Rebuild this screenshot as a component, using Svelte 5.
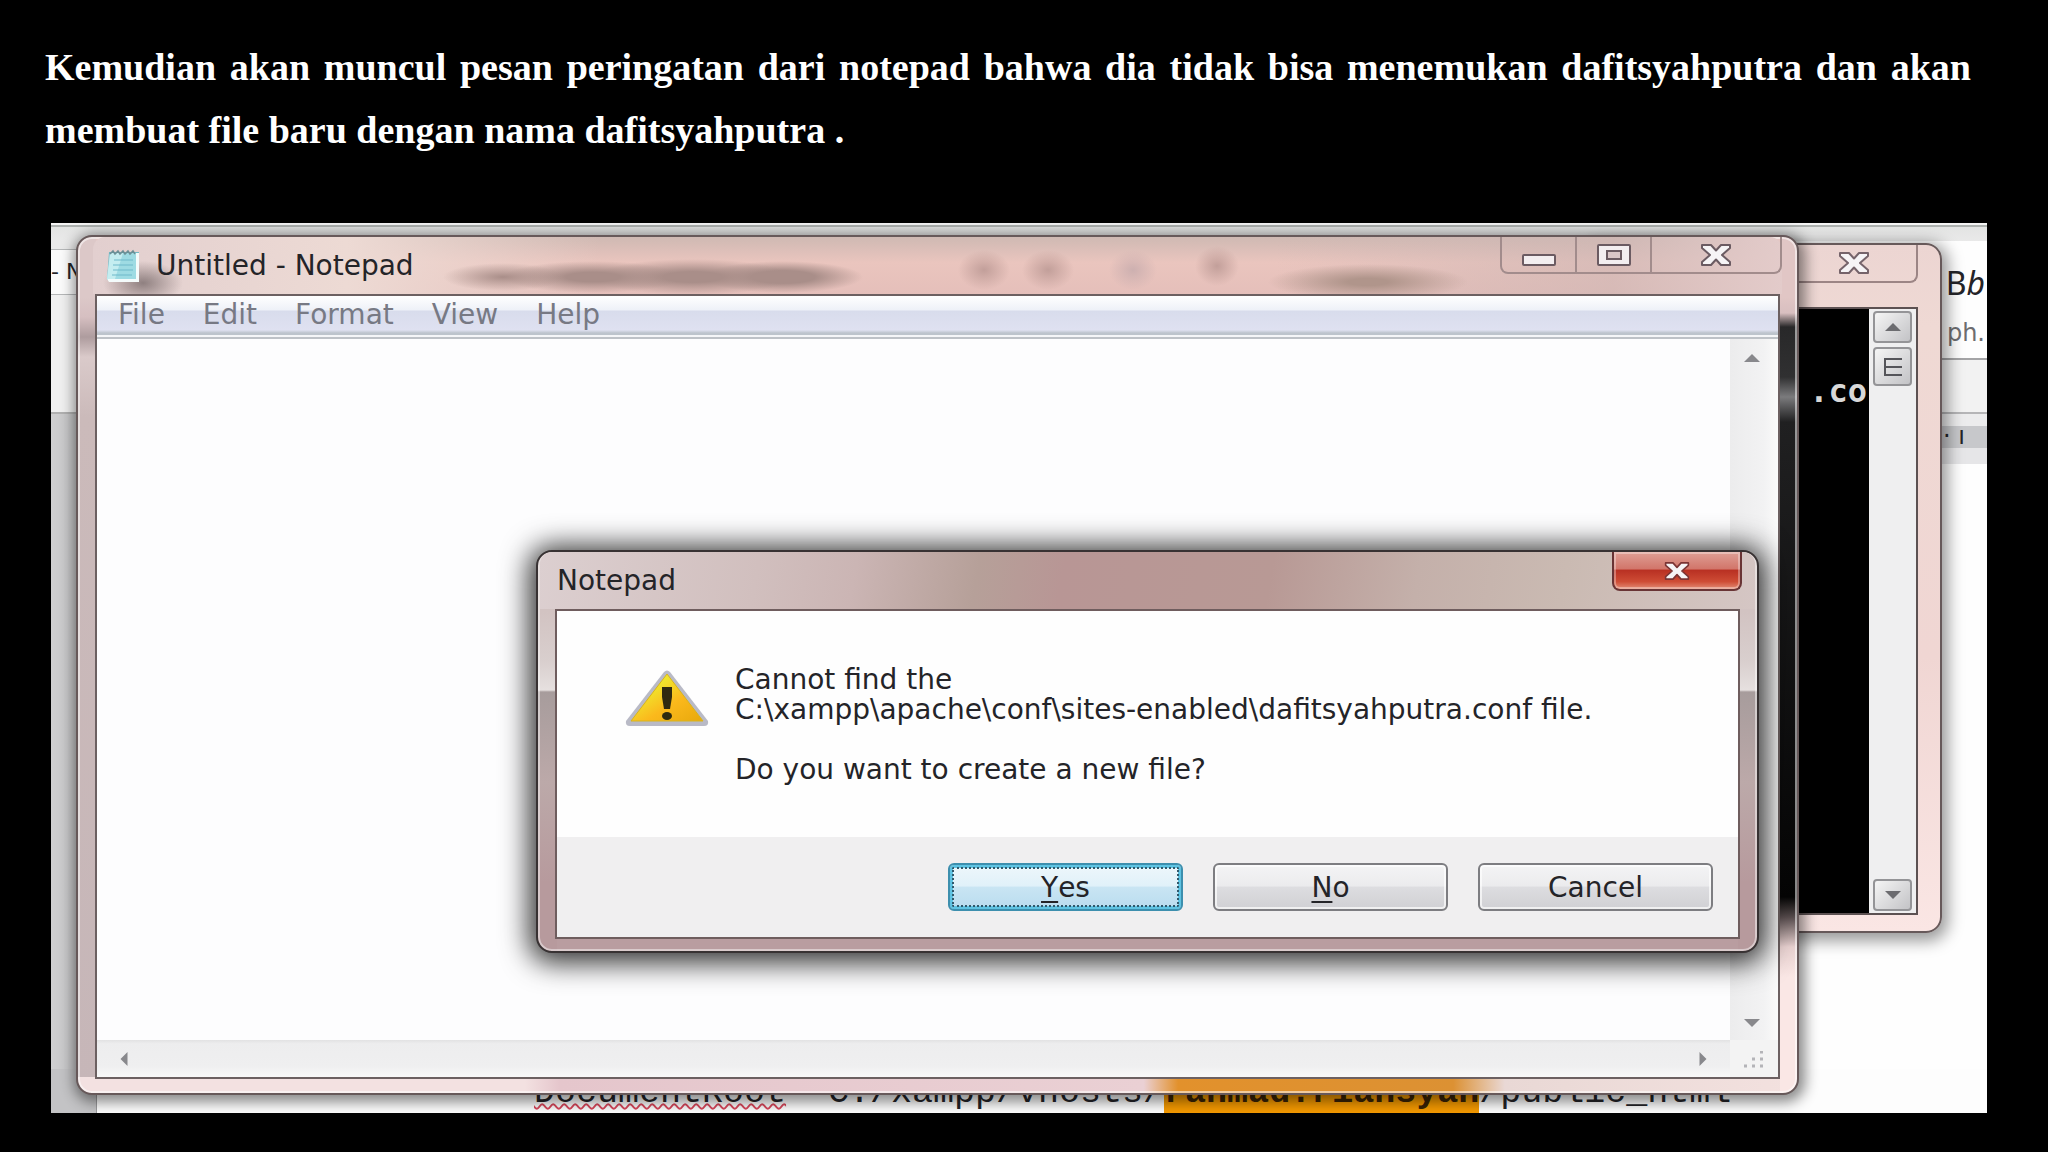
<script lang="ts">
  const menus = ['File', 'Edit', 'Format', 'View', 'Help'];

  let content = $state('');
</script>

{#snippet cross(outline: string)}
  <svg width="32" height="22" viewBox="0 0 32 22" aria-hidden="true">
    <path
      d="M2 1H11L16 6.5L21 1H30V4L22 11L30 18V21H21L16 15.5L11 21H2V18L10 11L2 4Z"
      fill="#f6f4f6"
      stroke={outline}
      stroke-width="2"
      stroke-linejoin="round"
    />
  </svg>
{/snippet}

{#snippet arrow(direction: string)}
  <svg class="arrow {direction}" width="20" height="10" viewBox="0 0 20 10" aria-hidden="true">
    <path d="M10 0L20 10H0Z" />
  </svg>
{/snippet}

<main>
  <p class="caption">
    Kemudian akan muncul pesan peringatan dari notepad bahwa dia tidak bisa menemukan dafitsyahputra
    dan akan membuat file baru dengan nama dafitsyahputra .
  </p>

  <div class="desktop">
    <div class="word">
      <div class="word-top"></div>
      <div class="word-sides">
        <div class="word-left">
          <div class="tab-row">- N</div>
          <div class="ribbon"></div>
          <div class="margin"></div>
        </div>
        <div class="word-right">
          <div class="styles">
            <span class="sample">B<i>b</i></span>
            <span class="style-name">ph.</span>
          </div>
          <div class="ribbon-foot"></div>
          <div class="ruler">· ı</div>
        </div>
      </div>
      <p class="code">
        <span class="misspelt">DocumentRoot</span> "C:/xampp/vhosts/<mark>rahmad.riansyah</mark>/public_html
      </p>
    </div>

    <section class="window console" aria-label="Command Prompt">
      <header class="console-title">
        <button class="console-close" aria-label="Close console">{@render cross('#75636a')}</button>
      </header>
      <div class="console-client">
        <pre>.co</pre>
        <div class="console-scroll">
          <button aria-label="Scroll console up">{@render arrow('up')}</button>
          <button class="thumb" aria-label="Scroll thumb">
            <svg width="20" height="20" viewBox="0 0 20 20" aria-hidden="true">
              <path d="M1 2H19M1 10H19M1 18H19M2 2V18" fill="none" stroke="#55555a" stroke-width="2" />
            </svg>
          </button>
          <button class="last" aria-label="Scroll console down">{@render arrow('down')}</button>
        </div>
      </div>
    </section>

    <section class="window notepad" aria-label="Untitled - Notepad">
      <header class="notepad-title">
        <svg width="36" height="36" viewBox="0 0 36 36" aria-hidden="true">
          <path d="M4 4H34V34L2 32Z" fill="#73b8c4" />
          <path d="M5 5H31V31H2Z" fill="#9edbe3" />
          <path d="M5 5H18L10 31H2Z" fill="#c4edf0" />
          <path d="M2 31H31V5H34V34H4Z" fill="#f4fbfb" />
          <path d="M9 12H28M8 17H28M8 22H28M7 27H27" stroke="#6fb9ca" stroke-width="1" />
          <path d="M5 6L8 3L10 6L13 3L15 6L18 3L20 6L23 3L25 6L28 3L30 6" fill="none" stroke="#6c8f96" stroke-width="1.5" />
        </svg>
        <h1>Untitled - Notepad</h1>
        <div class="window-buttons">
          <button class="minimize" aria-label="Minimize">
            <svg width="34" height="22" viewBox="0 0 34 22" aria-hidden="true">
              <rect x="1" y="11" width="32" height="10" rx="1" fill="#f3eef0" stroke="#6b5b62" stroke-width="2" />
            </svg>
          </button>
          <button class="maximize" aria-label="Maximize">
            <svg width="34" height="22" viewBox="0 0 34 22" aria-hidden="true">
              <rect x="1" y="1" width="32" height="20" rx="1" fill="#f3eef0" stroke="#6b5b62" stroke-width="2" />
              <rect x="10" y="7" width="14" height="8" fill="#d9c6c7" stroke="#6b5b62" stroke-width="2" />
            </svg>
          </button>
          <button class="close" aria-label="Close">{@render cross('#6b5b62')}</button>
        </div>
      </header>
      <div class="notepad-client">
        <nav>
          {#each menus as menu}
            <button>{menu}</button>
          {/each}
        </nav>
        <div class="editor">
          <textarea aria-label="Text editor" bind:value={content}></textarea>
          <div class="scroll vertical">
            <button aria-label="Scroll up">{@render arrow('up')}</button>
            <button aria-label="Scroll down">{@render arrow('down')}</button>
          </div>
          <div class="scroll horizontal">
            <button aria-label="Scroll left">{@render arrow('left')}</button>
            <button aria-label="Scroll right">{@render arrow('right')}</button>
          </div>
          <div class="grip">
            <svg width="24" height="20" viewBox="0 0 24 20" aria-hidden="true">
              <path
                d="M18 1H21M18 8H21M18 15H21M10 8H13M10 15H13M2 15H5"
                stroke="#b4b4b8"
                stroke-width="3"
              />
            </svg>
          </div>
        </div>
      </div>
    </section>

    <div class="window dialog" role="dialog" aria-labelledby="dialog-title">
      <header class="dialog-title">
        <h2 id="dialog-title">Notepad</h2>
        <button class="dialog-close" aria-label="Close dialog">{@render cross('#7b3434')}</button>
      </header>
      <div class="dialog-client">
        <div class="message">
          <svg width="86" height="58" viewBox="0 0 86 58" aria-hidden="true">
            <defs>
              <linearGradient id="warn" x1="0" y1="0" x2="1" y2="1">
                <stop offset="0.3" stop-color="#f0e42c" />
                <stop offset="0.6" stop-color="#fbb91c" />
                <stop offset="1" stop-color="#e8a80c" />
              </linearGradient>
            </defs>
            <path d="M40 3Q43 0 46 3L84 52Q85 57 80 57H6Q1 57 2 52Z" fill="#b9bac6" />
            <path d="M43 5L79 52H7Z" fill="url(#warn)" stroke="#d8b41c" stroke-width="1" />
            <path d="M38 18H48V28L46 40H40L38 28Z" fill="#2f2a10" />
            <ellipse cx="43" cy="47" rx="5" ry="4" fill="#2f2a10" />
          </svg>
          <div class="message-text">
            <p>Cannot find the<br />C:\xampp\apache\conf\sites-enabled\dafitsyahputra.conf file.</p>
            <p>Do you want to create a new file?</p>
          </div>
        </div>
        <footer>
          <button class="default"><u>Y</u>es</button>
          <button><u>N</u>o</button>
          <button>Cancel</button>
        </footer>
      </div>
    </div>
  </div>
</main>

<style>
  :global(body) {
    margin: 0;
    background: #000;
  }

  * {
    box-sizing: border-box;
  }

  main {
    padding: 36px 61px 39px 51px;
    font-family: 'DejaVu Sans', Verdana, sans-serif;
    font-size: 28px;
    color: #242428;
  }

  h1,
  h2,
  p,
  pre {
    margin: 0;
    font-size: inherit;
    font-weight: normal;
  }

  button {
    display: flex;
    align-items: center;
    justify-content: center;
    padding: 0;
    border: none;
    background: none;
    color: inherit;
    font: inherit;
  }

  .caption {
    margin: 0 16px 61px -6px;
    color: #fff;
    font: bold 38px/63px 'Liberation Serif', 'Times New Roman', serif;
    text-align: justify;
  }

  .desktop {
    position: relative;
    height: 890px;
    overflow: hidden;
    background: #fefefe;
  }

  /* document behind the windows */
  .word {
    display: flex;
    flex-direction: column;
    height: 100%;
  }

  .word-top {
    height: 18px;
    border-top: 2px solid #f4f4f4;
    background: linear-gradient(#aeb2b0 2px, #e3e4e3 2px, #e9e9e9);
  }

  .word-sides {
    display: flex;
    flex: 1;
    justify-content: space-between;
  }

  .word-left {
    display: flex;
    flex-direction: column;
    width: 46px;
    border-right: 1px solid #a5a5a5;
    background: #e9e9e9;
  }

  .tab-row {
    height: 46px;
    margin-top: 8px;
    border: solid #b5b7b8;
    border-width: 1px 0;
    background: #fbfbfb;
    font-size: 22px;
    line-height: 44px;
    white-space: nowrap;
  }

  .ribbon {
    height: 119px;
    border-bottom: 2px solid #b0b0b0;
    background: #f0f0f0;
  }

  .margin {
    flex: 1;
    background: linear-gradient(90deg, #d0d0d1, #b9b9bb);
  }

  .word-right {
    width: 60px;
  }

  .styles {
    display: flex;
    flex-direction: column;
    align-items: flex-end;
    gap: 20px;
    height: 119px;
    padding: 26px 2px 0 0;
    border-bottom: 2px solid #a4a4a6;
  }

  .sample {
    font: 32px/32px 'Noto Sans', sans-serif;
  }

  .style-name {
    color: #6d6d70;
    font-size: 24px;
    line-height: 28px;
  }

  .ribbon-foot {
    height: 54px;
    border-bottom: 2px solid #b5b5b7;
    background: #f2f2f2;
  }

  .ruler {
    height: 50px;
    padding-left: 16px;
    background: linear-gradient(#ececed 12px, #c7c8cb 12px, #c7c8cb 34px, #e6e6e8 34px);
    font-size: 24px;
    line-height: 44px;
  }

  .code {
    height: 44px;
    padding-left: 483px;
    background: linear-gradient(90deg, #c3c3c5 45px, #9a9a9c 45px, #9a9a9c 46px, #fdfdfd 46px);
    font: 35px/48px 'Liberation Mono', 'Courier New', monospace;
    white-space: nowrap;
    overflow: hidden;
  }

  .misspelt {
    text-decoration: underline wavy #d8465a 2px;
    text-decoration-skip-ink: none;
  }

  mark {
    display: inline-block;
    background: #f59a00;
    color: #3a2305;
    font-weight: bold;
  }

  .window {
    position: absolute;
    display: flex;
    flex-direction: column;
    border: 2px solid #67595a;
    border-radius: 16px;
  }

  /* console */
  .console {
    top: 20px;
    right: 45px;
    width: 360px;
    height: 690px;
    padding: 0 22px 16px;
    background: linear-gradient(#ecd5d2, #efd9d4 12%, #f0d6d3 60%, #fae6e4);
    box-shadow: 2px 4px 16px 4px #0006;
  }

  .console-title {
    display: flex;
    justify-content: flex-end;
    height: 62px;
  }

  .console-close {
    width: 128px;
    height: 38px;
    border: 2px solid #9c8585;
    border-top: none;
    border-radius: 0 0 8px 8px;
  }

  .console-client {
    display: flex;
    flex: 1;
    justify-content: flex-end;
    border: 2px solid #5c5152;
    background: #000;
  }

  pre {
    padding: 62px 2px 0 0;
    color: #d8d8d8;
    font: bold 32px/40px 'DejaVu Sans Mono', monospace;
  }

  .console-scroll {
    display: flex;
    flex-direction: column;
    gap: 4px;
    width: 47px;
    padding: 2px 4px;
    background: #efeff0;
  }

  .console-scroll button {
    height: 32px;
    border: 2px solid #949497;
    border-radius: 4px;
    background: linear-gradient(135deg, #f5f5f5, #c3c3c6);
  }

  .console-scroll .thumb {
    height: 39px;
  }

  .console-scroll .last {
    margin-top: auto;
  }

  .arrow {
    fill: #6c6c70;
  }

  .up {
    width: 16px;
  }

  .down {
    width: 16px;
    transform: rotate(180deg);
  }

  .left {
    transform: rotate(-90deg);
    width: 14px;
  }

  .right {
    transform: rotate(90deg);
    width: 14px;
  }

  /* notepad */
  .notepad {
    inset: 12px 188px 18px 25px;
    padding: 0 17px 14px;
    background:
      linear-gradient(#e1c6c5 60px, #d8bfc0 76px, #282829 90px, #303031 140px, #7b7b7d 160px, #202021 185px, #050505 660px, #564b4c 680px, #e8d1d0 710px, #fae7e5 740px) right / 17px 100% no-repeat,
      linear-gradient(90deg, #f3e1e1 26%, #e5c6cc 28%, #ead0d4 62%, #e2912c 64%, #dc9133 80%, #e9d8d5 83%, #f3e1df) bottom / 100% 16px no-repeat,
      linear-gradient(#dcc8c8 60px, #d6bfc1 80px, #ae9c9e 100px, #dacaca 120px, #cbbaba 180px, #c6b6b8) left / 18px 100% no-repeat,
      #e6c7c4;
    box-shadow:
      inset 0 0 0 2px #fff8,
      2px 3px 14px 4px #0007;
  }

  .notepad-title {
    display: flex;
    align-items: center;
    gap: 15px;
    height: 57px;
    margin: 0 -2px;
    padding-left: 12px;
    border-radius: 12px 12px 0 0;
    background:
      radial-gradient(ellipse 40px 22px at 50px 46px, #8f8080, #8f808000),
      radial-gradient(ellipse 60px 14px at 410px 40px, #a98e89, #a98e8900),
      radial-gradient(ellipse 90px 16px at 500px 40px, #a98e89 30%, #a98e8900),
      radial-gradient(ellipse 100px 18px at 600px 40px, #a98e89 30%, #a98e8900),
      radial-gradient(ellipse 80px 16px at 690px 40px, #a98e89 40%, #a98e8900),
      radial-gradient(ellipse 26px 20px at 891px 33px, #c29f9a, #c29f9a00),
      radial-gradient(ellipse 26px 20px at 955px 33px, #c29f9a, #c29f9a00),
      radial-gradient(ellipse 24px 20px at 1040px 33px, #cdb0b0, #cdb0b000),
      radial-gradient(ellipse 22px 20px at 1124px 29px, #c29f9a, #c29f9a00),
      radial-gradient(ellipse 100px 18px at 1275px 45px, #b0958b 20%, #b0958b00),
      linear-gradient(90deg, #dfc9c900 70%, #cdb6b499 90%, #e3cbca),
      linear-gradient(90deg, #e2cfcf, #eddad4 15%, #e8c7c300 30%),
      linear-gradient(#cfb9b3, #eac5be 45%, #e5bfba);
  }

  .notepad-title svg {
    flex: none;
  }

  .window-buttons {
    display: flex;
    align-self: flex-start;
    height: 37px;
    margin-left: auto;
    border: 2px solid #a28c8c;
    border-top: none;
    border-radius: 0 0 8px 8px;
  }

  .minimize,
  .maximize {
    width: 75px;
    border-right: 2px solid #a28c8c;
  }

  .close {
    width: 128px;
  }

  .notepad-client {
    display: flex;
    flex: 1;
    flex-direction: column;
    border: 2px solid #6c6061;
    background: #fdfdfe;
  }

  nav {
    display: flex;
    gap: 38px;
    height: 43px;
    padding-left: 21px;
    border-bottom: 2px solid #bec2c7;
    background: linear-gradient(#fff, #eef1f8 14px, #d8dcec 15px, #dfe1f1 34px, #bdc4cc 37px, #bdc4cc 39px, #f5f6f8 39px);
    color: #777984;
  }

  nav button {
    height: 37px;
  }

  .editor {
    display: grid;
    flex: 1;
    grid-template: 1fr 37px / 1fr 48px;
  }

  textarea {
    width: 100%;
    height: 100%;
    padding: 4px 8px;
    border: none;
    outline: none;
    background: #fdfdfe;
    color: inherit;
    font: inherit;
    resize: none;
  }

  .scroll {
    display: flex;
    justify-content: space-between;
    background: #efeff0;
  }

  .scroll .arrow {
    fill: #88888c;
  }

  .vertical {
    flex-direction: column;
    padding: 14px 4px 12px 0;
    background: linear-gradient(90deg, #ececed, #f2f2f3 70%, #fafafa);
  }

  .horizontal {
    padding: 0 20px;
    background: linear-gradient(#e2e2e3, #ededee 10%, #efeff0 70%, #f8f8f8);
  }

  .grip {
    display: flex;
    align-items: flex-end;
    justify-content: center;
    padding-bottom: 6px;
    background: #f3f3f3;
  }

  /* message box */
  .dialog {
    top: 327px;
    right: 228px;
    left: 485px;
    padding: 0 17px 12px;
    border-color: #383233;
    background:
      linear-gradient(#d2c3c2 60px, #d9cfce 110px, #e6e0df 138px, #a79c9c 140px, #bca9a9 230px, #b79a9d 330px) left / 19px 100% no-repeat,
      linear-gradient(#d2c3c2 60px, #d9cfce 110px, #e6e0df 138px, #a79c9c 140px, #bca9a9 230px, #b79a9d 330px) right / 19px 100% no-repeat,
      #b99da0;
    box-shadow:
      inset 0 0 0 2px #fff7,
      0 3px 28px 7px #000c;
  }

  .dialog-title {
    display: flex;
    align-items: center;
    justify-content: space-between;
    height: 57px;
    margin: 0 -15px;
    padding: 0 13px 0 17px;
    border-radius: 12px 12px 0 0;
    background: linear-gradient(100deg, #dccfd0, #d1bfbe 18%, #cbb5b4 26%, #b6a099 36%, #b89695 43%, #b89995 60%, #c4b0aa 72%, #cabab2 84%, #d5c6c4);
  }

  .dialog-close {
    align-self: flex-start;
    width: 130px;
    height: 39px;
    border: 2px solid #693435;
    border-top: none;
    border-radius: 0 0 8px 8px;
    background: linear-gradient(#dfa096, #d2766b 45%, #b93123 50%, #ce4c35 80%, #e38d77);
    box-shadow: inset 0 0 0 2px #fff5;
  }

  .dialog-close svg {
    width: 26px;
  }

  .dialog-client {
    border: 2px solid #6f5d5e;
    background: #fefefe;
  }

  .message {
    display: flex;
    gap: 25px;
    min-height: 226px;
    padding: 54px 67px 0;
    line-height: 30px;
    white-space: nowrap;
  }

  .message svg {
    flex: none;
    margin-top: 4px;
  }

  .message-text {
    display: flex;
    flex-direction: column;
    gap: 30px;
  }

  footer {
    display: flex;
    justify-content: flex-end;
    gap: 30px;
    padding: 26px 25px;
    background: #f0eff0;
  }

  footer button {
    width: 235px;
    height: 48px;
    border: 2px solid #7d7d81;
    border-radius: 6px;
    background: linear-gradient(#f4f4f5, #ebebed 48%, #dddde0 50%, #d0d0d4);
    box-shadow: inset 0 0 0 2px #fffa;
  }

  footer .default {
    border-color: #3d8fae;
    outline: 2px dotted #31596c;
    outline-offset: -6px;
    background: linear-gradient(#eef7fb, #e0f1f9 48%, #c9e5f3 50%, #b9dcef);
    box-shadow: inset 0 0 0 3px #5fc3e2;
  }

  u {
    text-decoration-thickness: 2px;
    text-underline-offset: 4px;
  }
</style>
